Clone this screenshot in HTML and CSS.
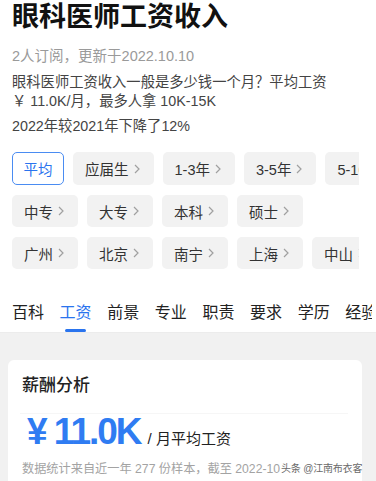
FILE: index.html
```html
<!DOCTYPE html>
<html lang="zh-CN">
<head>
<meta charset="utf-8">
<title>眼科医师工资收入</title>
<link rel="stylesheet" href="styles.css">
</head>
<body>
<div class="page">
  <header class="head">
    <h1 class="title">眼科医师工资收入</h1>
    <p class="meta">2人订阅，更新于2022.10.10</p>
    <p class="desc">眼科医师工资收入一般是多少钱一个月？平均工资<br>￥ 11.0K/月，最多人拿 10K-15K</p>
    <p class="trend">2022年较2021年下降了12%</p>
  </header>

  <div class="filters">
    <div class="chip-row">
      <span class="chip chip-active">平均</span>
      <span class="chip">应届生<svg class="arr" viewBox="0 0 6 10"><path d="M1 1l4 4-4 4"/></svg></span>
      <span class="chip">1-3年<svg class="arr" viewBox="0 0 6 10"><path d="M1 1l4 4-4 4"/></svg></span>
      <span class="chip">3-5年<svg class="arr" viewBox="0 0 6 10"><path d="M1 1l4 4-4 4"/></svg></span>
      <span class="chip">5-10年<svg class="arr" viewBox="0 0 6 10"><path d="M1 1l4 4-4 4"/></svg></span>
    </div>
    <div class="chip-row">
      <span class="chip">中专<svg class="arr" viewBox="0 0 6 10"><path d="M1 1l4 4-4 4"/></svg></span>
      <span class="chip">大专<svg class="arr" viewBox="0 0 6 10"><path d="M1 1l4 4-4 4"/></svg></span>
      <span class="chip">本科<svg class="arr" viewBox="0 0 6 10"><path d="M1 1l4 4-4 4"/></svg></span>
      <span class="chip">硕士<svg class="arr" viewBox="0 0 6 10"><path d="M1 1l4 4-4 4"/></svg></span>
    </div>
    <div class="chip-row">
      <span class="chip">广州<svg class="arr" viewBox="0 0 6 10"><path d="M1 1l4 4-4 4"/></svg></span>
      <span class="chip">北京<svg class="arr" viewBox="0 0 6 10"><path d="M1 1l4 4-4 4"/></svg></span>
      <span class="chip">南宁<svg class="arr" viewBox="0 0 6 10"><path d="M1 1l4 4-4 4"/></svg></span>
      <span class="chip">上海<svg class="arr" viewBox="0 0 6 10"><path d="M1 1l4 4-4 4"/></svg></span>
      <span class="chip">中山<svg class="arr" viewBox="0 0 6 10"><path d="M1 1l4 4-4 4"/></svg></span>
    </div>
  </div>

  <nav class="tabs">
    <div class="tab-track">
      <span class="tab">百科</span>
      <span class="tab tab-active">工资</span>
      <span class="tab">前景</span>
      <span class="tab">专业</span>
      <span class="tab">职责</span>
      <span class="tab">要求</span>
      <span class="tab">学历</span>
      <span class="tab">经验</span>
    </div>
  </nav>

  <main class="body">
    <section class="card">
      <h2 class="card-title">薪酬分析</h2>
      <div class="divider"></div>
      <div class="salary">
        <span class="salary-num">¥ 11.0K</span>
        <span class="salary-unit">/ 月平均工资</span>
      </div>
      <div class="note-row">
        <p class="note">数据统计来自近一年 277 份样本，截至 2022-10</p>
        <span class="watermark">头条 @江南布衣客</span>
      </div>
    </section>
  </main>
</div>
</body>
</html>
```

FILE: styles.css
```css
* { box-sizing: border-box; }

html, body {
  margin: 0;
  padding: 0;
  background: #ffffff;
}

body {
  font-family: "Liberation Sans", "Noto Sans CJK SC", sans-serif;
  color: #333;
  width: 376px;
  height: 481px;
  overflow: hidden;
}

.page {
  height: 481px;
  overflow: hidden;
}

.head {
  padding: 0 12px;
}

.title {
  margin: 0;
  font-size: 27px;
  line-height: 34px;
  font-weight: 700;
  color: #111;
}

.meta {
  margin: 12px 0 0;
  font-size: 14.5px;
  line-height: 20px;
  color: #9a9a9a;
}

.desc {
  margin: 7px 0 0;
  font-size: 14.3px;
  line-height: 18.5px;
  color: #444;
}

.trend {
  margin: 7px 0 0;
  font-size: 14.3px;
  line-height: 19px;
  color: #444;
}

.filters {
  margin: 16px 17px 0 12px;
  overflow: hidden;
  display: flex;
  flex-direction: column;
  gap: 10px;
}

.chip-row {
  display: flex;
  gap: 9px;
  white-space: nowrap;
}

.chip {
  flex: none;
  display: inline-flex;
  align-items: center;
  height: 32px;
  padding: 0 14px 0 12px;
  background: #f2f2f2;
  border-radius: 5px;
  font-size: 14.5px;
  color: #333;
}

.chip-row:first-child .chip { height: 33px; }

.arr {
  width: 6px;
  height: 10px;
  margin-left: 5px;
  fill: none;
  stroke: #a0a0a0;
  stroke-width: 1.2;
}

.chip-active {
  background: #fff;
  border: 1px solid #4a8cf2;
  color: #2a74ee;
  padding: 0 10.5px;
}

.tabs {
  margin-top: 25px;
  padding: 0 4px 0 12px;
  border-bottom: 1px solid #ececec;
  background: #fff;
}

.tab-track {
  display: flex;
  gap: 15.6px;
  overflow: hidden;
  white-space: nowrap;
}

.tab {
  flex: none;
  position: relative;
  height: 38px;
  line-height: 38px;
  font-size: 16px;
  color: #222;
}

.tab-active {
  color: #2a74ee;
}

.tab-active::after {
  content: "";
  position: absolute;
  left: 50%;
  bottom: 0;
  width: 21px;
  height: 3px;
  margin-left: -11px;
  border-radius: 2px;
  background: #2a74ee;
}

.body {
  background: #f1f1f1;
  padding: 27px 14px 0 8px;
  height: 200px;
}

.card {
  background: #fff;
  border-radius: 6px;
  padding: 14px 0 10px 14px;
  height: 200px;
}

.card-title {
  margin: 0;
  font-size: 17px;
  line-height: 24px;
  font-weight: 500;
  color: #222;
}

.divider {
  margin: 15px 0 0 -2px;
  height: 1px;
  background: #f6f6f6;
  width: 328px;
}

.salary {
  display: flex;
  align-items: baseline;
  padding-left: 5px;
  height: 36px;
}

.salary-num {
  font-size: 37px;
  line-height: 36px;
  font-weight: 700;
  color: #2f7cf2;
  letter-spacing: -2px;
}

.salary-unit {
  margin-left: 7px;
  font-size: 15px;
  line-height: 20px;
  color: #222;
}

.note-row {
  margin-top: 9px;
  display: flex;
  align-items: center;
  white-space: nowrap;
}

.note {
  margin: 0;
  font-size: 12.2px;
  line-height: 20px;
  color: #a3a3a3;
}

.watermark {
  margin-left: 1px;
  font-size: 10px;
  line-height: 14px;
  color: #6a6a6a;
  letter-spacing: -0.2px;
  text-shadow: 0 0 2px #fff;
}
```
